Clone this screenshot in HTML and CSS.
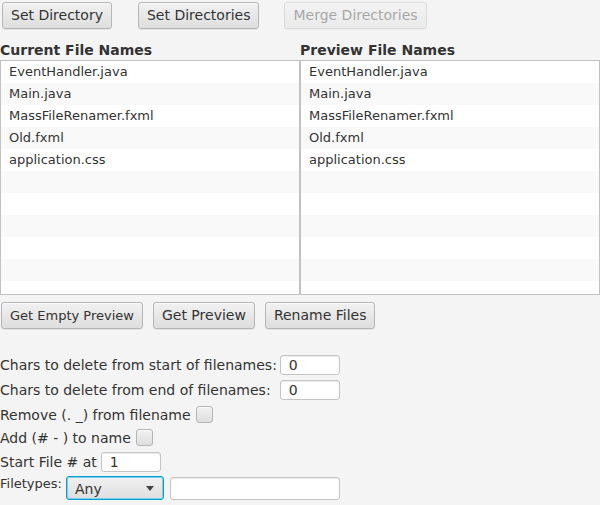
FILE: index.html
```html
<!DOCTYPE html>
<html>
<head>
<meta charset="utf-8">
<link rel="stylesheet" href="styles.css">
</head>
<body>
<div class="app">
  <div class="toolbar">
    <button class="btn">Set Directory</button>
    <button class="btn">Set Directories</button>
    <button class="btn disabled">Merge Directories</button>
  </div>
  <div class="columns">
    <div class="heading">Current File Names</div>
    <div class="heading">Preview File Names</div>
  </div>
  <div class="columns">
    <div class="list">
      <div class="cell">EventHandler.java</div>
      <div class="cell">Main.java</div>
      <div class="cell">MassFileRenamer.fxml</div>
      <div class="cell">Old.fxml</div>
      <div class="cell">application.css</div>
      <div class="cell"></div><div class="cell"></div><div class="cell"></div>
      <div class="cell"></div><div class="cell"></div><div class="cell"></div>
    </div>
    <div class="list">
      <div class="cell">EventHandler.java</div>
      <div class="cell">Main.java</div>
      <div class="cell">MassFileRenamer.fxml</div>
      <div class="cell">Old.fxml</div>
      <div class="cell">application.css</div>
      <div class="cell"></div><div class="cell"></div><div class="cell"></div>
      <div class="cell"></div><div class="cell"></div><div class="cell"></div>
    </div>
  </div>
  <div class="actions">
    <button class="btn btn-small">Get Empty Preview</button>
    <button class="btn">Get Preview</button>
    <button class="btn">Rename Files</button>
  </div>
  <div class="options">
    <div class="trim-grid">
      <span class="label">Chars to delete from start of filenames:</span>
      <div class="field">0</div>
      <span class="label">Chars to delete from end of filenames:</span>
      <div class="field">0</div>
    </div>
    <div class="opt-row row-remove">
      <span class="label">Remove (. _) from filename</span>
      <span class="check"></span>
    </div>
    <div class="opt-row row-add">
      <span class="label">Add (# - ) to name</span>
      <span class="check"></span>
    </div>
    <div class="opt-row row-start">
      <span class="label">Start File # at</span>
      <div class="field field-start">1</div>
    </div>
    <div class="opt-row row-types">
      <span class="label label-small">Filetypes:</span>
      <div class="combo">
        <span class="combo-text">Any</span>
        <span class="arrow"></span>
      </div>
      <div class="field field-types"></div>
    </div>
  </div>
</div>
</body>
</html>
```

FILE: styles.css
```css
* { box-sizing: border-box; }
html, body {
  margin: 0;
  padding: 0;
  background: #f4f4f4;
}
body {
  font-family: "DejaVu Sans", sans-serif;
  font-size: 14px;
  color: #333333;
  width: 600px;
  height: 505px;
  overflow: hidden;
}
.app { width: 600px; }

.btn {
  font-family: "DejaVu Sans", sans-serif;
  font-size: 14px;
  color: #333333;
  height: 27px;
  padding: 0 8px;
  margin: 0;
  border: 1px solid #b5b5b5;
  border-radius: 3px;
  background: linear-gradient(#f1f1f1, #dedede);
  box-shadow: inset 0 1px 0 #fafafa, 0 1px 0 #e4e4e4;
  line-height: 25px;
  white-space: nowrap;
}
.btn.disabled { opacity: 0.4; }
.btn-small { font-size: 13px; }

.toolbar {
  display: flex;
  height: 31px;
  padding: 2px 0 0 2px;
  gap: 26px;
}
.toolbar .btn:nth-child(3) { margin-left: -1px; }

.columns {
  display: grid;
  grid-template-columns: 300px 300px;
}
.heading {
  font-weight: bold;
  line-height: 16px;
  padding-top: 11px;
  padding-bottom: 2px;
}
.list {
  height: 235px;
  border: 1px solid #c2c2c2;
  background: #ffffff;
  overflow: hidden;
}
.cell {
  height: 22px;
  line-height: 22px;
  padding-left: 8px;
  font-size: 13px;
  background: #ffffff;
}
.cell:nth-child(even) { background: #f9f9f9; }

.actions {
  display: flex;
  gap: 10px;
  padding: 7px 0 0 1px;
}

.options {
  display: flex;
  flex-direction: column;
  padding-top: 26px;
}
.trim-grid {
  display: grid;
  grid-template-columns: max-content 60px;
  column-gap: 3px;
  row-gap: 5px;
  align-items: center;
}
.label { white-space: nowrap; line-height: 16px; }
.label-small { font-size: 13px; }
.field {
  height: 20px;
  background: #ffffff;
  border: 1px solid #c4c4c4;
  border-radius: 3px;
  box-shadow: inset 0 1px 1px #ececec;
  padding-left: 8px;
  line-height: 19px;
}
.opt-row {
  display: flex;
  align-items: center;
}
.row-remove { margin-top: 6px; height: 17px; gap: 5px; }
.row-add { margin-top: 6px; height: 17px; gap: 5px; }
.row-start { margin-top: 6px; height: 20px; gap: 4px; }
.row-types { margin-top: 4px; height: 24px; gap: 4px; align-items: flex-start; }
.check {
  width: 17px;
  height: 17px;
  border: 1px solid #b5b5b5;
  border-radius: 3px;
  background: linear-gradient(#f1f1f1, #dedede);
  box-shadow: inset 0 1px 0 #fafafa;
}
.field-start { width: 60px; }
.combo {
  width: 98px;
  height: 24px;
  border: 1px solid #039ed3;
  border-radius: 3px;
  box-shadow: inset 0 0 0 1px #7fcdea;
  background: linear-gradient(#f1f1f1, #dedede);
  display: flex;
  align-items: center;
  justify-content: space-between;
  padding: 0 9px 0 8px;
}
.combo-text { line-height: 16px; padding-top: 2px; }
.arrow {
  width: 0;
  height: 0;
  border-left: 4px solid transparent;
  border-right: 4px solid transparent;
  border-top: 5px solid #444444;
  margin-top: 1px;
}
.field-types { width: 170px; height: 23px; margin-left: 2px; margin-top: 1px; }
```
